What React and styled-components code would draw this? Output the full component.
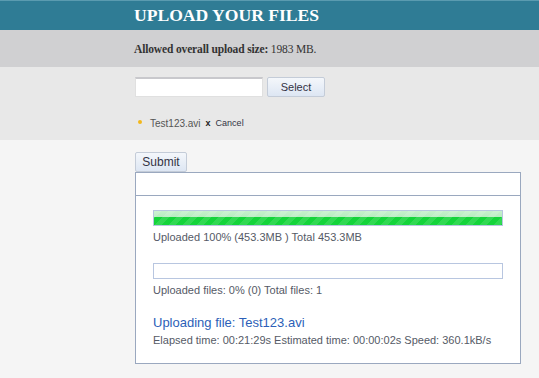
import React from 'react';
import styled, { createGlobalStyle } from 'styled-components';

const GlobalStyle = createGlobalStyle`
  body {
    margin: 0;
    background: #f5f5f5;
    font-family: "Liberation Sans", Arial, sans-serif;
  }
`;

const Header = styled.div`
  height: 30px;
  background: #2f7c95;
  border-top: 1px solid #5a9bb0;
  box-sizing: border-box;
  padding-left: 134px;
  display: flex;
  align-items: center;
`;

const Title = styled.h1`
  margin: 0;
  color: #fff;
  font-family: "Liberation Serif", "Times New Roman", serif;
  font-size: 17.6px;
  font-weight: bold;
`;

const InfoBand = styled.div`
  height: 37px;
  background: #d0d0d2;
  padding-left: 134px;
  display: flex;
  align-items: center;
  font-family: "Liberation Serif", "Times New Roman", serif;
  font-size: 11.5px;
  letter-spacing: -0.15px;
  color: #333;
`;

const SelectBand = styled.div`
  height: 73px;
  background: #e8e8e8;
  padding: 10px 0 0 135px;
  box-sizing: border-box;
`;

const Row = styled.div`
  display: flex;
  align-items: center;
  gap: 4px;
`;

const TextInput = styled.input`
  width: 128px;
  height: 20px;
  box-sizing: border-box;
  border: 1px solid #e0e0e0;
  border-top: 2px solid #c8c8cc;
  background: #fff;
  margin: 0;
  padding: 0;
`;

const Button = styled.button`
  height: 20px;
  box-sizing: border-box;
  border: 1px solid #c4ccd8;
  border-radius: 2px;
  background: linear-gradient(#f4f7fb, #dde6f3);
  font-family: "Liberation Sans", Arial, sans-serif;
  font-size: ${p => p.$size || 11}px;
  color: #334;
  padding: 0;
  width: ${p => p.$w}px;
  margin: 0;
`;

const FileItem = styled.div`
  display: flex;
  align-items: center;
  margin-top: 19px;
  font-size: 10px;
  color: #555;
  height: 14px;
`;

const Dot = styled.span`
  width: 4px;
  height: 4px;
  border-radius: 50%;
  background: #f2b71c;
  margin: 0 8px 2px 3px;
`;

const CancelLink = styled.span`
  font-size: 9px;
  color: #334;
  margin-left: 5px;
`;

const X = styled.span`
  font-size: 9px;
  font-weight: bold;
  color: #222;
  margin-left: 5px;
`;

const Main = styled.div`
  padding: 12px 0 0 135px;
`;

const Panel = styled.div`
  width: 386px;
  box-sizing: border-box;
  border: 1px solid #9aa8bf;
  background: #fff;
`;

const PanelHead = styled.div`
  height: 22px;
  border-bottom: 1px solid #9aa8bf;
`;

const PanelBody = styled.div`
  padding: 14px 17px 15px 17px;
  font-size: 11px;
  color: #555a66;
`;

const Bar = styled.div`
  width: 350px;
  height: 16px;
  box-sizing: border-box;
  border: 1px solid #b8c6e0;
  background: #fff;
  overflow: hidden;
`;

const Fill = styled.div`
  height: 100%;
  background:
    repeating-linear-gradient(135deg, rgba(255,255,255,0.12) 0 5px, rgba(255,255,255,0) 5px 10px),
    linear-gradient(#c6f0cc 0, #b6ecbf 45%, #14d43a 46%, #14d43a 100%);
`;

const Caption = styled.div`
  margin-top: ${p => p.$mt ?? 4}px;
  height: 15px;
  line-height: 15px;
`;

const Spacer = styled.div`
  height: ${p => p.$h}px;
`;

const Current = styled.div`
  font-size: 13px;
  color: #2c5fb8;
  height: 16px;
  line-height: 16px;
`;

function Progress({ percent, children }) {
  return (
    <>
      <Bar>
        <Fill style={{ width: `${percent}%` }} />
      </Bar>
      <Caption>{children}</Caption>
    </>
  );
}

export default function App() {
  return (
    <>
      <GlobalStyle />
      <Header>
        <Title>UPLOAD YOUR FILES</Title>
      </Header>
      <InfoBand>
        <b>Allowed overall upload size:</b>&nbsp;1983 MB.
      </InfoBand>
      <SelectBand>
        <Row>
          <TextInput />
          <Button $w={58}>Select</Button>
        </Row>
        <FileItem>
          <Dot />
          Test123.avi
          <X>x</X>
          <CancelLink>Cancel</CancelLink>
        </FileItem>
      </SelectBand>
      <Main>
        <Button $w={52} $size={12}>Submit</Button>
        <Panel>
          <PanelHead />
          <PanelBody>
            <Progress percent={100}>Uploaded 100% (453.3MB ) Total 453.3MB</Progress>
            <Spacer $h={18} />
            <Progress percent={0}>Uploaded files: 0% (0) Total files: 1</Progress>
            <Spacer $h={17} />
            <Current>Uploading file: Test123.avi</Current>
            <Caption $mt={2}>Elapsed time: 00:21:29s Estimated time: 00:00:02s Speed: 360.1kB/s</Caption>
          </PanelBody>
        </Panel>
      </Main>
    </>
  );
}
